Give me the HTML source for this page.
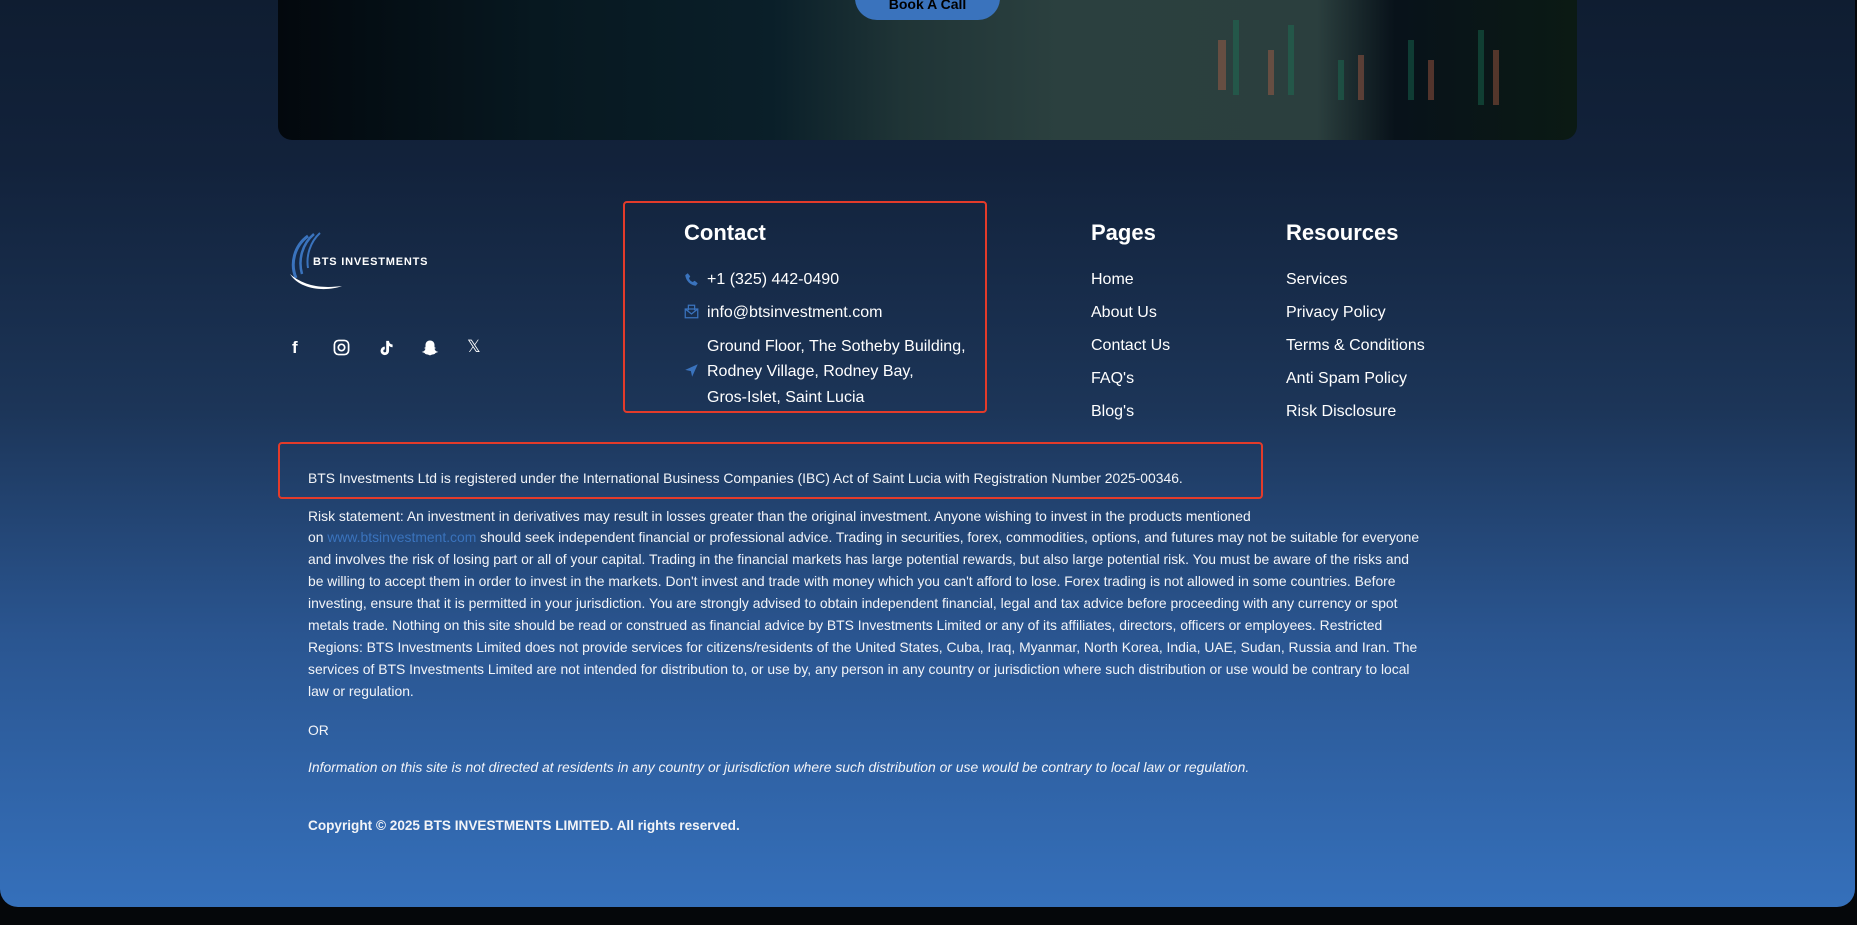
<!DOCTYPE html>
<html><head><meta charset="utf-8"><style>
*{margin:0;padding:0;box-sizing:border-box}
html,body{width:1857px;height:925px;overflow:hidden;background:#05070a;font-family:"Liberation Sans",sans-serif;color:#fff}
.panel{position:absolute;left:0;top:0;width:1855px;height:907px;border-radius:0 0 18px 18px;background:linear-gradient(180deg,#0f1d31 0%,#12223b 18%,#1c3558 45%,#2a5590 70%,#3570bb 100%)}
.hero{position:absolute;left:278px;top:-20px;width:1299px;height:160px;border-radius:0 0 14px 14px;overflow:hidden;background:linear-gradient(90deg,#03080d 0%,#071820 20%,#0a1f29 38%,#1f3436 48%,#2b403f 60%,#2b3f3e 80%,#08121a 86%,#0b1a14 100%)}
.btn{position:absolute;left:855px;top:-10px;width:145px;height:30px;border-radius:0 0 22px 22px;background:#3a73bd;color:#000;font-weight:bold;font-size:14px;text-align:center;line-height:14px;padding-top:7px;overflow:hidden}
.abs{position:absolute;white-space:nowrap}
h3{position:absolute;font-size:22px;font-weight:bold}
.li{position:absolute;font-size:16px;white-space:nowrap}
.red{position:absolute;border:2px solid #e33b2a;border-radius:4px}
.legal{position:absolute;left:308px;font-size:13.9px;white-space:nowrap;color:#f2f4f8}
</style></head><body>
<div class="panel"></div>
<div class="hero">
<svg width="1299" height="160" style="position:absolute;left:0;top:0">
<g opacity="0.4">
<rect x="940" y="60" width="8" height="50" fill="#c0664a"/><rect x="955" y="40" width="6" height="75" fill="#1b7b5b"/>
<rect x="990" y="70" width="6" height="45" fill="#c0664a"/><rect x="1010" y="45" width="6" height="70" fill="#1b7b5b"/>
<rect x="1060" y="80" width="6" height="40" fill="#1b7b5b"/><rect x="1080" y="75" width="6" height="45" fill="#c0664a"/>
<rect x="1130" y="60" width="6" height="60" fill="#1b7b5b"/><rect x="1150" y="80" width="6" height="40" fill="#c0664a"/>
<rect x="1200" y="50" width="6" height="75" fill="#1b7b5b"/><rect x="1215" y="70" width="6" height="55" fill="#c0664a"/>
</g></svg>
</div>
<div class="btn">Book A Call</div>

<div class="red" style="left:623px;top:201px;width:364px;height:212px"></div>
<div class="red" style="left:278px;top:442px;width:985px;height:57px"></div>

<svg class="abs" style="left:286px;top:230px" width="170" height="62" viewBox="0 0 170 62">
<path d="M22 6 C8 16 4 34 10 48" stroke="#3a73bd" stroke-width="3" fill="none"/>
<path d="M28 4 C16 14 12 30 16 44" stroke="#3a73bd" stroke-width="2.5" fill="none"/>
<path d="M34 3 C24 12 20 26 22 38" stroke="#3a73bd" stroke-width="2" fill="none"/>
<path d="M4 44 C20 58 40 58 56 56 C40 62 14 60 4 44Z" fill="#fff"/>
<text x="27" y="35" font-family="Liberation Sans" font-size="11" font-weight="bold" letter-spacing="0.8" fill="#fff">BTS INVESTMENTS</text>
</svg>

<div class="abs" style="left:292px;top:338px;font-size:17px;font-weight:bold">f</div>
<svg class="abs" style="left:333px;top:339px" width="17" height="17" viewBox="0 0 24 24" fill="none" stroke="#fff" stroke-width="2.4"><rect x="2" y="2" width="20" height="20" rx="6"/><circle cx="12" cy="12" r="4.5"/></svg>
<svg class="abs" style="left:377px;top:339px" width="17" height="18" viewBox="0 0 24 24"><path d="M13 2h4c0 3 2 5 5 5v4c-2 0-4-1-5-2v7a6 6 0 1 1-6-6v4a2 2 0 1 0 2 2z" fill="#fff"/></svg>
<svg class="abs" style="left:421px;top:339px" width="18" height="18" viewBox="0 0 24 24"><path d="M12 2c4 0 6 3 6 6v3l2 1-2 1c1 3 3 4 5 4-1 1-3 1-4 2-1 2-4 1-7 3-3-2-6-1-7-3-1-1-3-1-4-2 2 0 4-1 5-4l-2-1 2-1V8c0-3 2-6 6-6z" fill="#fff"/></svg>
<div class="abs" style="left:467px;top:337px;font-size:17px">𝕏</div>

<h3 style="left:684px;top:220px">Contact</h3>
<svg class="abs" style="left:684px;top:272px" width="15" height="15" viewBox="0 0 24 24"><path d="M6 2l4 5-2 3c1 3 3 5 6 6l3-2 5 4-3 4C10 21 3 14 2 5z" fill="#3a73bd"/></svg>
<div class="li" style="left:707px;top:271px">+1 (325) 442-0490</div>
<svg class="abs" style="left:684px;top:304px" width="15" height="15" viewBox="0 0 24 24" fill="none" stroke="#3a73bd" stroke-width="2"><rect x="2" y="8" width="20" height="14"/><path d="M2 8l10 8 10-8M7 10V2h10v8"/></svg>
<div class="li" style="left:707px;top:304px">info@btsinvestment.com</div>
<div class="li" style="left:707px;top:338px">Ground Floor, The Sotheby Building,</div>
<svg class="abs" style="left:684px;top:363px" width="15" height="15" viewBox="0 0 24 24"><path d="M22 2L2 11l9 2 2 9z" fill="#3a73bd"/></svg>
<div class="li" style="left:707px;top:363px">Rodney Village, Rodney Bay,</div>
<div class="li" style="left:707px;top:389px">Gros-Islet, Saint Lucia</div>

<h3 style="left:1091px;top:220px">Pages</h3>
<div class="li" style="left:1091px;top:271px">Home</div>
<div class="li" style="left:1091px;top:304px">About Us</div>
<div class="li" style="left:1091px;top:337px">Contact Us</div>
<div class="li" style="left:1091px;top:370px">FAQ's</div>
<div class="li" style="left:1091px;top:403px">Blog's</div>

<h3 style="left:1286px;top:220px">Resources</h3>
<div class="li" style="left:1286px;top:271px">Services</div>
<div class="li" style="left:1286px;top:304px">Privacy Policy</div>
<div class="li" style="left:1286px;top:337px">Terms &amp; Conditions</div>
<div class="li" style="left:1286px;top:370px">Anti Spam Policy</div>
<div class="li" style="left:1286px;top:403px">Risk Disclosure</div>

<div class="legal" style="top:470px">BTS Investments Ltd is registered under the International Business Companies (IBC) Act of Saint Lucia with Registration Number 2025-00346.</div>
<div class="legal" style="top:508px">Risk statement: An investment in derivatives may result in losses greater than the original investment. Anyone wishing to invest in the products mentioned</div>
<div class="legal" style="top:529px">on <span style="color:#3a73bd">www.btsinvestment.com</span> should seek independent financial or professional advice. Trading in securities, forex, commodities, options, and futures may not be suitable for everyone</div>
<div class="legal" style="top:551px">and involves the risk of losing part or all of your capital. Trading in the financial markets has large potential rewards, but also large potential risk. You must be aware of the risks and</div>
<div class="legal" style="top:573px">be willing to accept them in order to invest in the markets. Don't invest and trade with money which you can't afford to lose. Forex trading is not allowed in some countries. Before</div>
<div class="legal" style="top:595px">investing, ensure that it is permitted in your jurisdiction. You are strongly advised to obtain independent financial, legal and tax advice before proceeding with any currency or spot</div>
<div class="legal" style="top:617px">metals trade. Nothing on this site should be read or construed as financial advice by BTS Investments Limited or any of its affiliates, directors, officers or employees. Restricted</div>
<div class="legal" style="top:639px">Regions: BTS Investments Limited does not provide services for citizens/residents of the United States, Cuba, Iraq, Myanmar, North Korea, India, UAE, Sudan, Russia and Iran. The</div>
<div class="legal" style="top:661px">services of BTS Investments Limited are not intended for distribution to, or use by, any person in any country or jurisdiction where such distribution or use would be contrary to local</div>
<div class="legal" style="top:683px">law or regulation.</div>
<div class="legal" style="top:722px">OR</div>
<div class="legal" style="top:759px;font-style:italic">Information on this site is not directed at residents in any country or jurisdiction where such distribution or use would be contrary to local law or regulation.</div>
<div class="legal" style="top:818px;font-weight:bold;font-size:13.6px">Copyright © 2025 BTS INVESTMENTS LIMITED. All rights reserved.</div>
</body></html>
